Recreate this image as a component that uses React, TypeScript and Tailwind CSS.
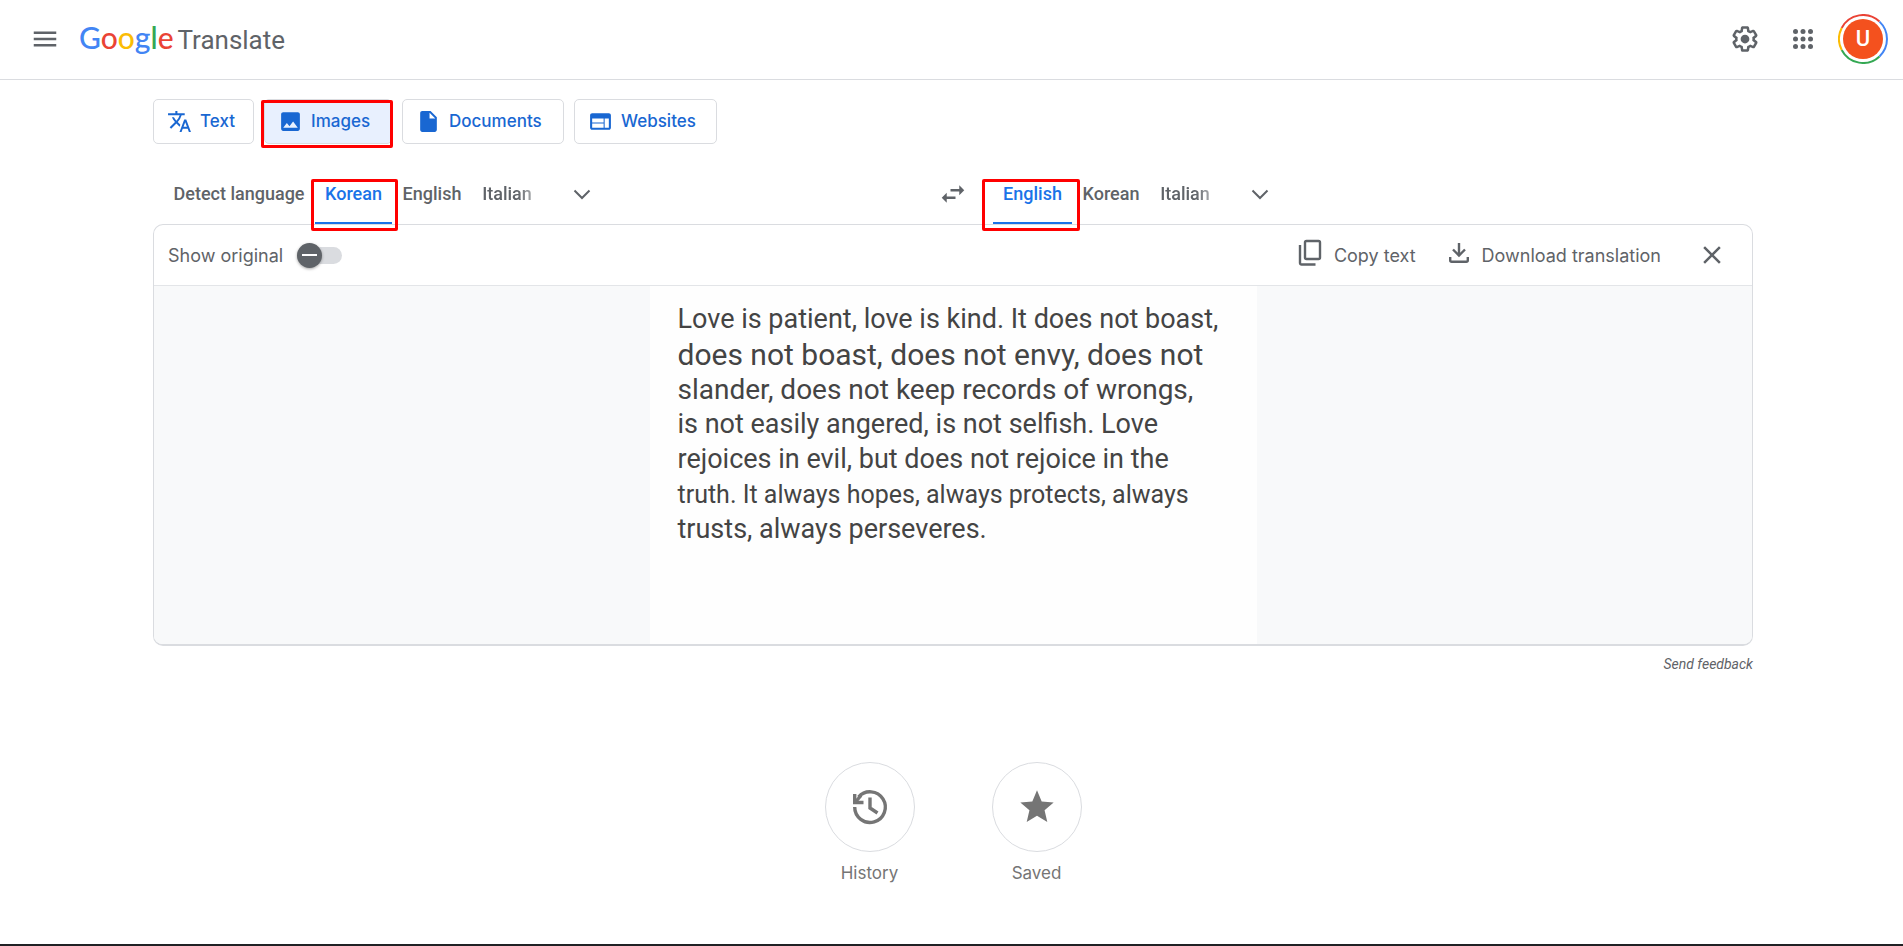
import clsx from "clsx";
import { useState } from "react";
import type { ReactNode } from "react";
import {
  MdClose,
  MdImage,
  MdInsertDriveFile,
  MdMenu,
  MdStar,
  MdSwapHoriz,
  MdTranslate,
  MdWeb,
} from "react-icons/md";

const modes = [
  { name: "Text", icon: MdTranslate, width: "w-[101px]" },
  { name: "Images", icon: MdImage, width: "w-[128px]" },
  { name: "Documents", icon: MdInsertDriveFile, width: "w-[162px]" },
  { name: "Websites", icon: MdWeb, width: "w-[143px]" },
];

const lines = [
  { text: "Love is patient, love is kind. It does not boast,", size: "text-[27px]" },
  { text: "does not boast, does not envy, does not", size: "text-[30px]" },
  { text: "slander, does not keep records of wrongs,", size: "text-[28px]" },
  { text: "is not easily angered, is not selfish. Love", size: "text-[27px]" },
  { text: "rejoices in evil, but does not rejoice in the", size: "text-[27px]" },
  { text: "truth. It always hopes, always protects, always", size: "text-[25px]" },
  { text: "trusts, always perseveres.", size: "text-[27px]" },
];

export default function App() {
  return (
    <div className="flex min-h-screen flex-col border-b-2 border-[#202124] bg-white font-['Inter','Liberation_Sans',sans-serif] text-[#5f6368]">
      <Header />
      <main className="flex flex-col pr-[150px] pl-[153px]">
        <ModeBar />
        <LanguageBar />
        <ResultPanel />
        <a
          href="#feedback"
          className="mt-[6px] self-end font-['Roboto',sans-serif] text-sm leading-6 italic"
        >
          Send feedback
        </a>
        <Shortcuts />
      </main>
    </div>
  );
}

function Header() {
  return (
    <header className="flex h-20 items-center border-b border-[#dadce0] pr-[15px] pb-[2px] pl-[30px]">
      <button aria-label="Main menu">
        <MdMenu className="size-[30px]" />
      </button>
      <a href="#home" className="ml-[19px] flex items-baseline gap-1">
        <span className="font-['Lato',sans-serif] text-[30px] leading-9 font-medium">
          <span className="text-[#4285f4]">G</span>
          <span className="text-[#ea4335]">o</span>
          <span className="text-[#fbbc05]">o</span>
          <span className="text-[#4285f4]">g</span>
          <span className="text-[#34a853]">l</span>
          <span className="text-[#ea4335]">e</span>
        </span>
        <span className="font-['Roboto',sans-serif] text-[26px] leading-9">Translate</span>
      </a>
      <div className="ml-auto flex items-center">
        <button aria-label="Settings">
          <GearIcon />
        </button>
        <button aria-label="Google apps" className="ml-7">
          <AppsIcon />
        </button>
        <button
          aria-label="Account"
          className="relative ml-5 flex size-[50px] items-center justify-center"
        >
          <AccountRing />
          <span className="flex size-10 items-center justify-center rounded-full bg-[#f4511e] font-['Roboto',sans-serif] text-[22px] font-medium text-white">
            U
          </span>
        </button>
      </div>
    </header>
  );
}

function ModeBar() {
  const [mode, setMode] = useState("Images");

  return (
    <nav className="mt-[19px] flex gap-[10px]">
      {modes.map(({ name, icon: Icon, width }) => (
        <div key={name} className="relative">
          <button
            onClick={() => setMode(name)}
            className={clsx(
              "flex h-[45px] items-center gap-2 rounded-[5px] border border-[#dadce0] pl-[13px] text-[17px] font-medium text-[#1967d2]",
              width,
              mode === name && "bg-[#e8f0fe]",
            )}
          >
            <Icon className="size-[25px] shrink-0" />
            {name}
          </button>
          {mode === name && <Highlight className="top-px -right-px -bottom-1 -left-[3px]" />}
        </div>
      ))}
    </nav>
  );
}

function LanguageBar() {
  return (
    <div className="mt-5 flex h-[60px] font-['Roboto',sans-serif]">
      <div className="flex w-[774px] pl-[10px]">
        <LanguageTab name="Detect language" width="w-[152px]" />
        <LanguageTab name="Korean" width="w-[77px]" active />
        <LanguageTab name="English" width="w-[80px]" />
        <LanguageTab name="Italian" width="w-[70px]" faded />
        <MoreButton label="More source languages" />
      </div>
      <button
        aria-label="Swap languages"
        className="flex h-[60px] w-[52px] items-center justify-center"
      >
        <MdSwapHoriz className="size-[30px]" />
      </button>
      <div className="flex pl-[14px]">
        <LanguageTab name="English" width="w-[79px]" active wide />
        <LanguageTab name="Korean" width="w-[78px]" />
        <LanguageTab name="Italian" width="w-[70px]" faded />
        <MoreButton label="More target languages" />
      </div>
    </div>
  );
}

type TabProps = {
  name: string;
  width: string;
  active?: boolean;
  faded?: boolean;
  wide?: boolean;
};

function LanguageTab({ name, width, active, faded, wide }: TabProps) {
  return (
    <div className={clsx("relative", width)}>
      <button
        className={clsx(
          "flex h-full w-full items-center justify-center border-b-2 text-[18px] font-medium whitespace-nowrap",
          active ? "border-[#1a73e8] text-[#1a73e8]" : "border-transparent",
          faded && "[mask-image:linear-gradient(to_right,black_65%,transparent_110%)]",
        )}
      >
        {name}
      </button>
      {active && (
        <Highlight
          className={clsx("top-[15px] -bottom-[7px]", wide ? "-right-2 -left-[11px]" : "-right-[6px] -left-1")}
        />
      )}
    </div>
  );
}

function MoreButton({ label }: { label: string }) {
  return (
    <button aria-label={label} className="flex h-full w-20 items-center justify-center">
      <svg viewBox="0 0 18 18" className="size-[18px]" fill="none" stroke="currentColor" strokeWidth="2">
        <path d="M1.5 5.5 9 13l7.5-7.5" />
      </svg>
    </button>
  );
}

function ResultPanel() {
  const [showOriginal, setShowOriginal] = useState(false);

  return (
    <section className="overflow-hidden rounded-[10px] border border-b-2 border-[#dadce0]">
      <div className="flex h-[61px] items-center border-b border-[#e3e5e8] pl-[14px] text-[18px]">
        <label htmlFor="show-original">Show original</label>
        <span className="relative ml-[14px] flex h-[25px] w-[45px] items-center">
          <input
            id="show-original"
            type="checkbox"
            checked={showOriginal}
            onChange={(e) => setShowOriginal(e.target.checked)}
            className="h-[17px] w-[45px] appearance-none rounded-full bg-[#dadce0]"
          />
          <span
            className={clsx(
              "pointer-events-none absolute top-0 flex size-[25px] items-center justify-center rounded-full bg-[#5f6368] shadow-[0_1px_3px_rgba(0,0,0,0.35)]",
              showOriginal ? "right-0" : "left-0",
            )}
          >
            <span className="h-[2px] w-[15px] bg-white" />
          </span>
        </span>
        <div className="ml-auto flex items-center">
          <button className="flex items-center gap-2">
            <CopyIcon />
            Copy text
          </button>
          <button className="ml-7 flex items-center gap-2">
            <DownloadIcon />
            Download translation
          </button>
          <button aria-label="Clear image" className="mr-[25px] ml-9">
            <MdClose className="size-[30px]" />
          </button>
        </div>
      </div>
      <div className="flex justify-center bg-[#f8f9fa]">
        <div className="flex h-[358px] w-[607px] flex-col bg-[#fefefe] pt-4 pl-7 font-['Roboto',sans-serif] text-[#444]">
          {lines.map((line) => (
            <p key={line.text} className={clsx("h-[35px] leading-[35px] whitespace-nowrap", line.size)}>
              {line.text}
            </p>
          ))}
        </div>
      </div>
    </section>
  );
}

function Shortcuts() {
  return (
    <div className="mt-[86px] flex justify-center gap-[77px]">
      <Shortcut label="History">
        <HistoryIcon />
      </Shortcut>
      <Shortcut label="Saved">
        <MdStar className="size-10" />
      </Shortcut>
    </div>
  );
}

function Shortcut({ label, children }: { label: string; children: ReactNode }) {
  return (
    <button className="flex w-[90px] flex-col items-center gap-[9px] text-[17px] leading-6 text-[#757575]">
      <span className="flex size-[90px] items-center justify-center rounded-full border border-[#dadce0]">
        {children}
      </span>
      {label}
    </button>
  );
}

// red outline drawn over the selected controls
function Highlight({ className }: { className: string }) {
  return (
    <span
      className={clsx("pointer-events-none absolute rounded-[2px] border-3 border-[#ff0000]", className)}
    />
  );
}

function AccountRing() {
  return (
    <svg viewBox="0 0 50 50" className="absolute inset-0 size-[50px]" fill="none" strokeWidth="2">
      <path stroke="#ea4335" d="M3.7 14A24 24 0 0 1 41.5 7.6" />
      <path stroke="#4285f4" d="M41.5 7.6A24 24 0 0 1 41.5 42.4" />
      <path stroke="#34a853" d="M41.5 42.4A24 24 0 0 1 3.7 36" />
      <path stroke="#fbbc05" d="M3.7 36A24 24 0 0 1 3.7 14" />
    </svg>
  );
}

function AppsIcon() {
  return (
    <svg viewBox="0 0 24 24" className="size-[30px]" fill="currentColor">
      {[6, 12, 18].map((y) =>
        [6, 12, 18].map((x) => <circle key={`${x}-${y}`} cx={x} cy={y} r="2" />),
      )}
    </svg>
  );
}

function GearIcon() {
  return (
    <svg viewBox="0 0 24 24" className="size-[30px]" fill="currentColor">
      <path d="M13.85 22.25h-3.7c-.74 0-1.36-.54-1.45-1.27l-.27-1.89c-.27-.14-.53-.29-.79-.46l-1.8.72c-.7.26-1.47-.03-1.81-.65L2.2 15.53c-.35-.66-.2-1.44.36-1.88l1.53-1.19c-.01-.15-.02-.3-.02-.46 0-.15.01-.31.02-.46l-1.52-1.19c-.59-.45-.74-1.26-.37-1.88l1.85-3.19c.34-.62 1.11-.9 1.79-.63l1.81.73c.26-.17.52-.32.78-.46l.27-1.91c.09-.7.71-1.25 1.44-1.25h3.7c.74 0 1.36.54 1.45 1.27l.27 1.89c.27.14.53.29.79.46l1.8-.72c.71-.26 1.48.03 1.82.65l1.84 3.18c.36.66.2 1.44-.36 1.88l-1.52 1.19c.01.15.02.3.02.46s-.01.31-.02.46l1.52 1.19c.56.45.72 1.23.37 1.86l-1.86 3.22c-.34.62-1.11.9-1.8.63l-1.8-.72c-.26.17-.52.32-.78.46l-.27 1.91c-.1.68-.72 1.22-1.46 1.22zm-3.23-2h2.76l.37-2.55.53-.22c.44-.18.88-.44 1.34-.78l.45-.34 2.38.96 1.38-2.4-2.03-1.58.07-.56c.03-.26.06-.51.06-.78s-.03-.53-.06-.78l-.07-.56 2.03-1.58-1.39-2.4-2.39.96-.45-.35c-.42-.32-.87-.58-1.33-.77l-.52-.22-.37-2.55h-2.76l-.37 2.55-.53.21c-.44.19-.88.44-1.34.79l-.45.33-2.38-.95-1.39 2.39 2.03 1.58-.07.56a7 7 0 0 0-.06.79c0 .26.02.53.06.78l.07.56-2.03 1.58 1.38 2.4 2.39-.96.45.35c.43.33.86.58 1.33.77l.53.22.38 2.55z" />
      <circle cx="12" cy="12" r="3.5" />
    </svg>
  );
}

function CopyIcon() {
  return (
    <svg viewBox="0 0 30 30" className="mb-1 size-[30px]" fill="none" stroke="currentColor" strokeWidth="2.4">
      <rect x="9" y="3" width="15" height="18" rx="1.5" />
      <path d="M4 7v18a1.5 1.5 0 0 0 1.5 1.5H19.5" />
    </svg>
  );
}

function DownloadIcon() {
  return (
    <svg viewBox="0 0 30 30" className="mb-1 size-[30px]" fill="none" stroke="currentColor" strokeWidth="2.4">
      <path d="M15 5v12M9 11.5l6 6 6-6" />
      <path d="M6.2 19v3.3a1.5 1.5 0 0 0 1.500 1.500h14.600a1.500 1.500 0 0 0 1.500-1.500V19" />
    </svg>
  );
}

function HistoryIcon() {
  return (
    <svg viewBox="0 0 40 40" className="size-10" fill="none" stroke="currentColor" strokeWidth="3.4">
      <path d="M4.7 20A15.300 15.300 0 1 0 8.500 10" />
      <path d="M4.700 7v8.500H13.500" />
      <path d="M5 15.500 11 8.500" />
      <path d="M20 10.500V21l7.500 5" />
    </svg>
  );
}
